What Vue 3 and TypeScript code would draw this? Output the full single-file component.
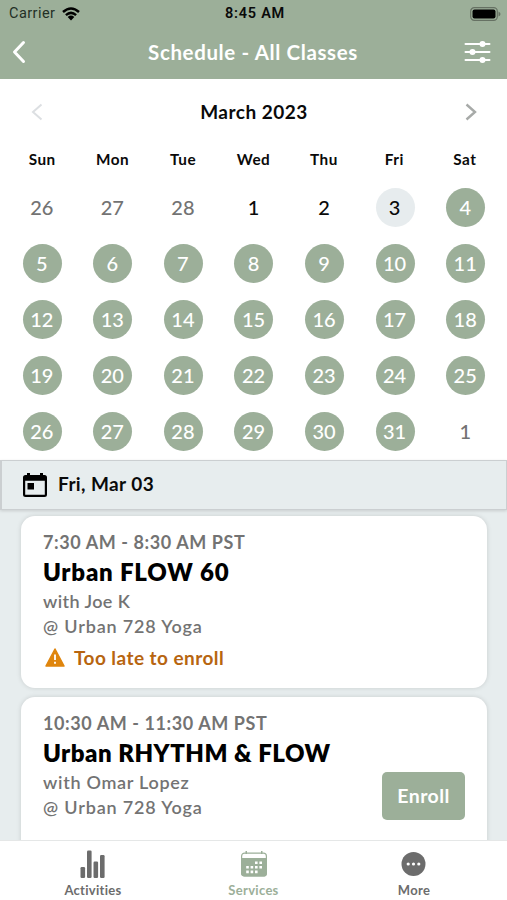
<script setup lang="ts">
interface Day { label: number; kind: 'muted' | 'plain' | 'selected' | 'open' }
interface ClassItem { time: string; title: string; teacher: string; place: string; late: boolean }

const weekdays: string[] = ['Sun', 'Mon', 'Tue', 'Wed', 'Thu', 'Fri', 'Sat']
const days: Day[] = [
  ...[26, 27, 28].map((label): Day => ({ label, kind: 'muted' })),
  ...Array.from({ length: 31 }, (_, i): Day => ({
    label: i + 1,
    kind: i < 2 ? 'plain' : i === 2 ? 'selected' : 'open',
  })),
  { label: 1, kind: 'muted' },
]
const classes: ClassItem[] = [
  { time: '7:30 AM - 8:30 AM PST', title: 'Urban FLOW 60', teacher: 'with Joe K', place: '@ Urban 728 Yoga', late: true },
  { time: '10:30 AM - 11:30 AM PST', title: 'Urban RHYTHM & FLOW', teacher: 'with Omar Lopez', place: '@ Urban 728 Yoga', late: false },
]
</script>

<template>
  <div class="screen">
    <header class="top">
      <div class="status">
        <div class="carrier">
          <span>Carrier</span>
          <svg width="18" height="14" viewBox="0 0 18 14" fill="none" stroke="#000" stroke-width="2.5">
            <path d="M1 5Q9 -2 17 5M3.9 8.1Q9 3.7 14.1 8.1" />
            <path d="M5.7 9.9Q9 7.2 12.3 9.9L9 13.4Z" fill="#000" stroke="none" />
          </svg>
        </div>
        <span class="clock">8:45 AM</span>
        <svg class="battery" width="31" height="14" viewBox="0 0 31 14">
          <rect x=".7" y=".7" width="26.6" height="12.6" rx="3.6" fill="none" stroke="#667163" stroke-width="1.2" />
          <rect x="2.5" y="2.5" width="23" height="9" rx="2" />
          <path d="M28.5 4.5Q30.5 5.5 30.5 7T28.5 9.5Z" fill="#667163" />
        </svg>
      </div>
      <nav class="nav">
        <svg width="14" height="24" viewBox="0 0 14 24" fill="none" stroke="#fff" stroke-width="3" stroke-linecap="round" stroke-linejoin="round"><path d="M11.5 2.5 2.5 12l9 9.5" /></svg>
        <h1>Schedule - All Classes</h1>
        <svg width="27" height="24" viewBox="0 0 27 24" fill="#fff" stroke="#fff" stroke-width="2" stroke-linecap="round">
          <path d="M1.5 4h24M1.5 12h24M1.5 20h24" /><circle cx="18.5" cy="4" r="2" /><circle cx="8.5" cy="12" r="2" /><circle cx="18.5" cy="20" r="2" />
        </svg>
      </nav>
    </header>

    <section class="calendar">
      <div class="month">
        <svg width="12" height="18" viewBox="0 0 12 18" fill="none" stroke="#dcdfe2" stroke-width="2"><path d="M10.5 1.5 2 9l8.500 7.500" /></svg>
        <h2>March 2023</h2>
        <svg width="12" height="18" viewBox="0 0 12 18" fill="none" stroke="#a7aaa8" stroke-width="2.4"><path d="M1.500 1.500 10 9l-8.500 7.500" /></svg>
      </div>
      <div class="grid weekdays"><span v-for="w in weekdays" :key="w">{{ w }}</span></div>
      <div class="grid">
        <div v-for="(d, i) in days" :key="i" class="cell"><span class="day" :class="d.kind">{{ d.label }}</span></div>
      </div>
    </section>

    <div class="date">
      <svg width="26" height="26" viewBox="0 0 26 26">
        <path fill-rule="evenodd" d="M3.500 2H5V0h3v2h10V0h3v2h1.500Q25 2 25 4.500v17Q25 24 22.500 24h-19Q1 24 1 21.500v-17Q1 2 3.500 2ZM3.200 7.800v14h19.600v-14Z" />
        <path d="M5.500 10h6.500v6.500H5.500Z" />
      </svg>
      <span>Fri, Mar 03</span>
    </div>

    <main class="list">
      <article v-for="c in classes" :key="c.title" class="card">
        <p class="time">{{ c.time }}</p>
        <h3 :class="{ long: !c.late }">{{ c.title }}</h3>
        <p class="detail teacher" :class="{ long: !c.late }">{{ c.teacher }}</p>
        <p class="detail">{{ c.place }}</p>
        <div v-if="c.late" class="late">
          <svg width="20" height="19" viewBox="0 0 20 19"><path fill="#df850d" stroke="#df850d" stroke-width="1.500" stroke-linejoin="round" d="M10 1 19 18H1Z" /><path d="M10 6.500v5.500M10 13.800v2" stroke="#fff" stroke-width="1.800" /></svg>
          <span>Too late to enroll</span>
        </div>
        <button v-else class="enroll" type="button">Enroll</button>
      </article>
    </main>

    <footer class="tabs">
      <div class="tab">
        <svg width="28" height="30" viewBox="0 0 28 30" fill="#6c6c6c"><rect x="1.500" y="18" width="4.600" height="11" rx="1.200" /><rect x="8" y="1.500" width="4.600" height="27.500" rx="1.200" /><rect x="14.500" y="12.500" width="4.600" height="16.500" rx="1.200" /><rect x="21" y="6" width="4.600" height="23" rx="1.200" /></svg>
        <span>Activities</span>
      </div>
      <div class="tab active">
        <svg width="28" height="30" viewBox="0 0 28 30">
          <rect x="1.600" y="4.100" width="24.800" height="22.800" rx="3" fill="none" stroke="#9caf99" stroke-width="1.200" />
          <path d="M1 9h26V24q0 3.500-3.500 3.500h-19Q1 27.500 1 24ZM5.500 2h1.500v3H5.500ZM21 2h1.500v3H21Z" fill="#9caf99" />
          <path d="M15 13.700h7M6.200 18.300h15.800M6.200 22.900h11.400" fill="none" stroke="#fff" stroke-width="2.600" stroke-dasharray="2.600 1.800" />
        </svg>
        <span>Services</span>
      </div>
      <div class="tab">
        <svg width="28" height="30" viewBox="0 0 28 30"><circle cx="13.500" cy="15" r="12" fill="#6c6c6c" /><g fill="#fff"><circle cx="8.200" cy="15" r="1.600" /><circle cx="13.500" cy="15" r="1.600" /><circle cx="18.800" cy="15" r="1.600" /></g></svg>
        <span>More</span>
      </div>
    </footer>
  </div>
</template>

<style>
body { margin: 0; background: #fff; }
</style>

<style scoped>
.screen { width: 507px; height: 900px; display: flex; flex-direction: column; overflow: hidden; background: #e7edee; font-family: Lato, "Open Sans", sans-serif; color: #0a0a0a; }
h1, h2, h3, p { margin: 0; }
svg { display: block; flex: none; }
.top { height: 79px; background: #9caf99; flex: none; }
.status { height: 28px; display: grid; grid-template-columns: 1fr auto 1fr; align-items: center; padding: 0 6px 0 9px; font: 14.500px/28px Roboto, sans-serif; }
.carrier { display: flex; gap: 7px; align-items: center; color: #233025; letter-spacing: .45px; }
.clock { font-weight: 600; letter-spacing: .75px; }
.battery { justify-self: end; }
.nav { height: 48px; display: grid; grid-template-columns: 1fr auto 1fr; align-items: center; padding: 0 16px 0 12px; color: #fff; }
.nav svg:last-child { justify-self: end; }
.nav h1 { font-size: 20.500px; font-weight: 700; letter-spacing: .62px; padding-left: 3px; }
.calendar { height: 381px; flex: none; background: #fff; }
.month { height: 66px; display: flex; justify-content: space-between; align-items: center; padding: 0 30px 0 31px; }
.month h2 { font-size: 19px; font-weight: 700; letter-spacing: .5px; padding-bottom: 2px; }
.grid { display: grid; grid-template-columns: repeat(7, 1fr); padding: 0 6px 0 7px; justify-items: center; }
.weekdays { font-size: 15.300px; line-height: 29px; font-weight: 700; height: 34px; letter-spacing: .5px; padding-right: 7px; }
.cell { height: 56px; display: flex; align-items: center; }
.day { width: 39px; height: 39px; border-radius: 50%; display: flex; align-items: center; justify-content: center; font-size: 20px; font-weight: 500; line-height: 39px; box-sizing: border-box; padding: 1px 1px 0 0; }
.day.muted { color: #737373; }
.day.open { background: #9caf99; color: #fff; }
.day.selected { background: #e7ecee; }
.date { height: 50px; flex: none; box-sizing: border-box; border: 1px solid #cbcfd1; border-width: 1px 1px 1px 2px; display: flex; align-items: center; gap: 10px; padding-left: 20px; font-size: 19px; font-weight: 700; letter-spacing: .4px; box-shadow: 0 1px 3px #0002; }
.date svg { margin-top: 2px; }
.date span { padding-bottom: 3px; }
.list { flex: 1; min-height: 0; overflow: hidden; padding: 6px 20px 0 21px; display: flex; flex-direction: column; gap: 9px; }
.card { height: 172px; flex: none; position: relative; box-sizing: border-box; border-radius: 14px; background: #fff; padding: 14px 22px; box-shadow: 0 0 5px #0002; }
.time { font-size: 18px; line-height: 24px; font-weight: 700; color: #737373; letter-spacing: .58px; }
.card h3 { font-size: 24px; line-height: 35px; font-weight: 800; color: #000; letter-spacing: .8px; }
.card h3.long { letter-spacing: .5px; }
.detail { font-size: 18px; line-height: 25px; font-weight: 600; color: #737373; letter-spacing: .84px; }
.teacher { letter-spacing: .4px; }
.teacher.long { letter-spacing: .7px; }
.late { display: flex; align-items: center; gap: 9px; padding-left: 2px; height: 36px; font-size: 19px; font-weight: 700; color: #b76510; letter-spacing: .45px; }
.enroll { position: absolute; right: 22px; bottom: 49px; width: 83px; height: 48px; padding: 0 0 2px; border: 0; border-radius: 5px; background: #9caf99; color: #fff; font: 700 19.500px Lato, sans-serif; letter-spacing: .4px; }
.tabs { height: 60px; flex: none; box-sizing: border-box; border-top: 1px solid #e5e7e7; background: #fff; display: grid; grid-template-columns: repeat(3, 160.500px); justify-content: center; }
.tab { display: flex; flex-direction: column; align-items: center; padding-top: 8px; color: #6c6c6c; font-size: 13px; font-weight: 700; line-height: 22px; letter-spacing: .3px; }
.tab.active { color: #9caf99; }
</style>
